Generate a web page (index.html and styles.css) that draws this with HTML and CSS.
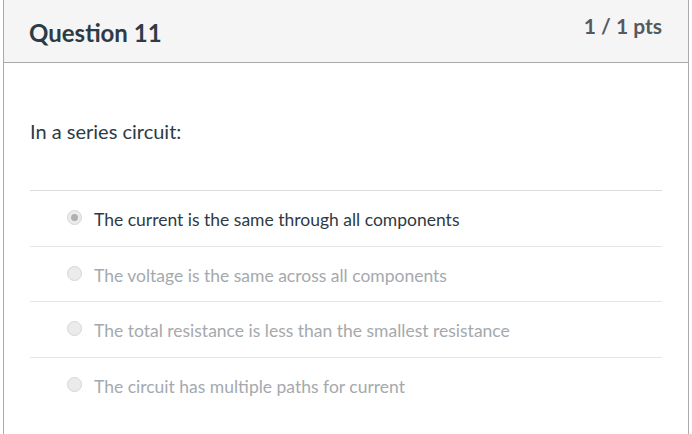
FILE: index.html
```html
<!DOCTYPE html>
<html>
<head>
<meta charset="utf-8">
<link rel="stylesheet" href="styles.css">
</head>
<body>
<div class="question">
  <div class="q-header">
    <h2 class="q-title">Question 11</h2>
    <div class="q-points">1 / 1 pts</div>
  </div>
  <div class="q-body">
    <p class="q-text">In a series circuit:</p>
    <div class="answers">
      <div class="answer selected">
        <span class="radio"></span>
        <span class="answer-label">The current is the same through all components</span>
      </div>
      <div class="answer">
        <span class="radio"></span>
        <span class="answer-label">The voltage is the same across all components</span>
      </div>
      <div class="answer">
        <span class="radio"></span>
        <span class="answer-label">The total resistance is less than the smallest resistance</span>
      </div>
      <div class="answer">
        <span class="radio"></span>
        <span class="answer-label">The circuit has multiple paths for current</span>
      </div>
    </div>
  </div>
</div>
</body>
</html>
```

FILE: styles.css
```css
html, body {
  margin: 0;
  padding: 0;
  background: #ffffff;
}
body {
  font-family: Lato, "Open Sans", sans-serif;
  color: #2d3b45;
  height: 434px;
  overflow: hidden;
}
.question {
  box-sizing: border-box;
  margin-left: 3px;
  width: 686px;
  height: 434px;
  border-left: 1px solid #aaaaaa;
  border-right: 1px solid #aaaaaa;
}
.q-header {
  background: #f5f5f5;
  height: 62px;
  border-bottom: 1px solid #aaaaaa;
  display: flex;
  justify-content: space-between;
  align-items: flex-start;
  padding: 0 26px 0 25px;
}
.q-title {
  margin: 0;
  padding-top: 18px;
  font-size: 24px;
  line-height: 29px;
  font-weight: 700;
  color: #2d3b45;
}
.q-points {
  padding-top: 13px;
  font-size: 21px;
  line-height: 25px;
  font-weight: 700;
  color: #555a5f;
}
.q-body {
  padding: 0 26px 0 26px;
}
.q-text {
  margin: 0;
  padding-top: 55px;
  padding-bottom: 46px;
  font-size: 20px;
  line-height: 26px;
  border-bottom: 1px solid #dddddd;
  color: #2d3b45;
}
.answer {
  display: flex;
  align-items: center;
  box-sizing: border-box;
  height: 55.5px;
  padding-top: 3px;
  border-bottom: 1px solid #e6e6e6;
  padding-left: 37px;
  color: #a5a9ad;
  font-size: 17.5px;
}
.answer:last-child {
  border-bottom: 0;
}
.answer.selected {
  color: #2d3b45;
}
.radio {
  width: 13px;
  height: 13px;
  border-radius: 50%;
  border: 1px solid #d6d6d6;
  background: #ebebeb;
  margin-right: 12px;
  margin-top: -4px;
  position: relative;
  flex-shrink: 0;
}
.answer.selected .radio::after {
  content: "";
  position: absolute;
  left: 3px;
  top: 3px;
  width: 7px;
  height: 7px;
  border-radius: 50%;
  background: #b0b0b0;
}
```
